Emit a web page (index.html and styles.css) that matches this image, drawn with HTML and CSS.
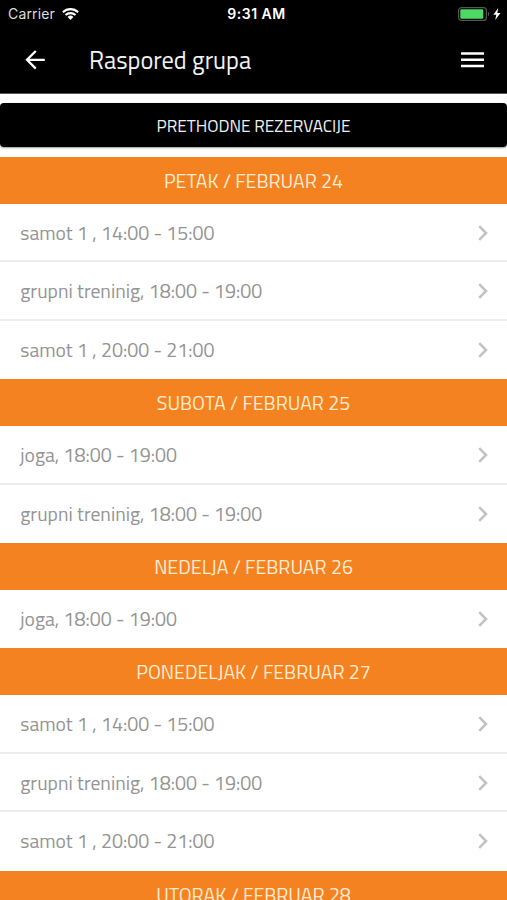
FILE: index.html
```html
<!DOCTYPE html>
<html lang="sr">
<head>
    <meta charset="utf-8">
    <title>Raspored grupa</title>
    <link rel="stylesheet" href="styles.css">
</head>
<body>
    <svg class="symbols" width="0" height="0">
        <symbol id="chevron" viewBox="0 0 10 16">
            <path d="M1.2 1.2 8 8 1.2 14.8" fill="none" stroke="#c3c3c3" stroke-width="2.6"/>
        </symbol>
    </svg>

    <header class="top">
        <div class="status-bar">
            <div class="status-left">
                <span class="carrier">Carrier</span>
                <svg class="wifi" width="17" height="12" viewBox="0 0 17 12">
                    <path d="M.9 4.2a10.9 10.9 0 0 1 15.2 0M3.5 7.1a7.2 7.2 0 0 1 10 0" fill="none" stroke="#fff" stroke-width="2.1"/>
                    <path d="M5.6 9a4.1 4.1 0 0 1 5.8 0L8.5 12z" fill="#fff"/>
                </svg>
            </div>
            <span class="clock">9:31 AM</span>
            <div class="status-right">
                <svg width="32" height="14" viewBox="0 0 32 14">
                    <rect x=".6" y=".6" width="27.8" height="12.8" rx="3" fill="none" stroke="#555" stroke-width="1.2"/>
                    <rect x="2.3" y="2.3" width="23" height="9.4" rx="1.3" fill="#4cd964"/>
                    <path d="M29.9 4.8c2 .8 2 3.6 0 4.4z" fill="#555"/>
                </svg>
                <svg width="8" height="12" viewBox="0 0 8 12">
                    <path d="M5.2 0 .3 6.8h3L2.2 12l5.3-7H4.3z" fill="#fff"/>
                </svg>
            </div>
        </div>
        <div class="nav-bar">
            <svg class="back" width="20" height="20" viewBox="0 0 20 20">
                <path d="M19.8 9.8H2.2M10.8 1 2 9.8l8.8 8.8" fill="none" stroke="#fff" stroke-width="2.3"/>
            </svg>
            <h1>Raspored grupa</h1>
            <svg class="menu" width="23" height="16" viewBox="0 0 23 16">
                <path d="M0 1.5h23M0 7.8h23M0 14h23" stroke="#fff" stroke-width="2.4"/>
            </svg>
        </div>
    </header>

    <button class="history">PRETHODNE REZERVACIJE</button>

    <main class="schedule">
        <h2>PETAK / FEBRUAR 24</h2>
        <ul>
            <li><span>samot 1 , 14:00 - 15:00</span><svg><use href="#chevron"/></svg></li>
            <li><span>grupni treninig, 18:00 - 19:00</span><svg><use href="#chevron"/></svg></li>
            <li><span>samot 1 , 20:00 - 21:00</span><svg><use href="#chevron"/></svg></li>
        </ul>
        <h2>SUBOTA / FEBRUAR 25</h2>
        <ul>
            <li><span>joga, 18:00 - 19:00</span><svg><use href="#chevron"/></svg></li>
            <li><span>grupni treninig, 18:00 - 19:00</span><svg><use href="#chevron"/></svg></li>
        </ul>
        <h2>NEDELJA / FEBRUAR 26</h2>
        <ul>
            <li><span>joga, 18:00 - 19:00</span><svg><use href="#chevron"/></svg></li>
        </ul>
        <h2>PONEDELJAK / FEBRUAR 27</h2>
        <ul>
            <li><span>samot 1 , 14:00 - 15:00</span><svg><use href="#chevron"/></svg></li>
            <li><span>grupni treninig, 18:00 - 19:00</span><svg><use href="#chevron"/></svg></li>
            <li><span>samot 1 , 20:00 - 21:00</span><svg><use href="#chevron"/></svg></li>
        </ul>
        <h2>UTORAK / FEBRUAR 28</h2>
    </main>
</body>
</html>
```
FILE: styles.css
```css
* {
    box-sizing: border-box;
}

body {
    margin: 0;
    height: 900px;
    overflow: hidden;
    background-color: #fff;
    font-family: "Titillium Web", Roboto, sans-serif;
}

.symbols {
    display: block;
}

.top {
    height: 94px;
    background-color: #000;
    border-bottom: 1px solid #555;
    color: #fff;
}

.status-bar {
    display: grid;
    grid-template-columns: 1fr auto 1fr;
    align-items: center;
    height: 27px;
    padding: 0 6px 0 8px;
    font-family: Inter, sans-serif;
    font-size: 14px;
}

.status-left,
.status-right {
    display: flex;
    align-items: center;
    gap: 7px;
}

.status-right {
    justify-content: flex-end;
    gap: 3px;
}

.carrier {
    color: #ddd;
    letter-spacing: 0.15px;
}

.clock {
    padding-left: 4px;
    font-weight: 600;
    letter-spacing: 0.5px;
}

.nav-bar {
    display: flex;
    align-items: center;
    height: 66px;
    padding: 0 23px 0 25px;
}

.nav-bar h1 {
    flex: 1;
    margin: -2px 0 0 44px;
    font-size: 24.4px;
    font-weight: 400;
    color: #f2f2f2;
}

.history {
    display: block;
    width: 100%;
    height: 44px;
    margin: 9.3px 0 9.7px;
    padding: 2px 0 0;
    border: none;
    border-radius: 4px;
    background-color: #000;
    box-shadow: 0 1px 2px rgba(0, 0, 0, 0.4);
    color: #eee;
    font-family: inherit;
    font-size: 17.1px;
}

.schedule h2 {
    height: 46.7px;
    margin: 0;
    background-color: #f58220;
    color: #ffecd2;
    font-size: 19.6px;
    font-weight: 400;
    line-height: 48px;
    text-align: center;
}

.schedule ul {
    margin: 0;
    padding: 0;
    list-style: none;
}

.schedule li {
    display: flex;
    justify-content: space-between;
    align-items: center;
    height: 58.55px;
    padding: 2px 19.5px 0 20.3px;
    border-bottom: 2px solid #ececec;
    color: #949494;
    font-size: 19.6px;
}

.schedule li:last-child {
    border-bottom-color: #fff;
}

.schedule li svg {
    width: 10px;
    height: 16px;
}
```
